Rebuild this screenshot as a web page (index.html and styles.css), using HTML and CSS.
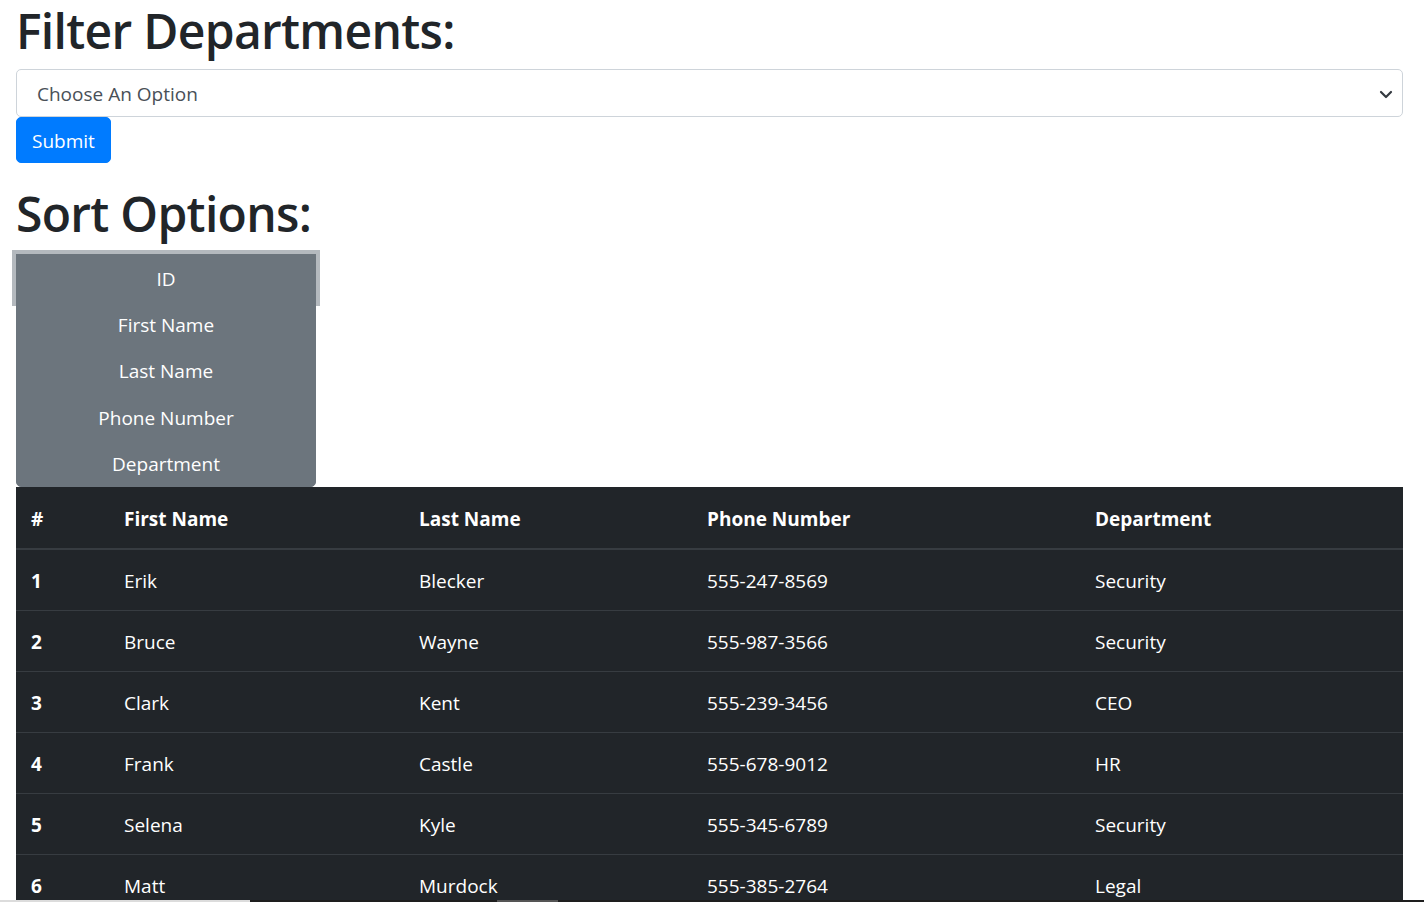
FILE: index.html
```html
<!DOCTYPE html>
<html lang="en">
<head>
<meta charset="utf-8">
<title>Employees</title>
<link rel="stylesheet" href="styles.css">
</head>
<body>
<div class="page">
  <h1 class="title">Filter Departments:</h1>
  <form class="filter">
    <div class="select-wrap">
      <select class="select">
        <option>Choose An Option</option>
      </select>
      <svg class="chevron" width="14" height="10" viewBox="0 0 14 10"><path d="M2 3l5 5 5-5" fill="none" stroke="#343a40" stroke-width="2.2" stroke-linecap="round" stroke-linejoin="round"/></svg>
    </div>
    <button type="button" class="btn-primary">Submit</button>
  </form>

  <h1 class="title title-sort">Sort Options:</h1>
  <div class="sort-group">
    <button type="button" class="sort-btn focused">ID</button>
    <button type="button" class="sort-btn">First Name</button>
    <button type="button" class="sort-btn">Last Name</button>
    <button type="button" class="sort-btn">Phone Number</button>
    <button type="button" class="sort-btn last">Department</button>
  </div>

  <table class="table">
    <colgroup>
      <col class="c1"><col class="c2"><col class="c3"><col class="c4"><col class="c5">
    </colgroup>
    <thead>
      <tr><th>#</th><th>First Name</th><th>Last Name</th><th>Phone Number</th><th>Department</th></tr>
    </thead>
    <tbody>
      <tr><th>1</th><td>Erik</td><td>Blecker</td><td>555-247-8569</td><td>Security</td></tr>
      <tr><th>2</th><td>Bruce</td><td>Wayne</td><td>555-987-3566</td><td>Security</td></tr>
      <tr><th>3</th><td>Clark</td><td>Kent</td><td>555-239-3456</td><td>CEO</td></tr>
      <tr><th>4</th><td>Frank</td><td>Castle</td><td>555-678-9012</td><td>HR</td></tr>
      <tr><th>5</th><td>Selena</td><td>Kyle</td><td>555-345-6789</td><td>Security</td></tr>
      <tr><th>6</th><td>Matt</td><td>Murdock</td><td>555-385-2764</td><td>Legal</td></tr>
    </tbody>
  </table>
</div>
<div class="scrollstrip"></div>
</body>
</html>
```

FILE: styles.css
```css
* { box-sizing: border-box; }
html, body { margin: 0; padding: 0; }
body {
  font-family: "Open Sans", "Noto Sans", "Liberation Sans", sans-serif;
  font-size: 19px;
  line-height: 30px;
  color: #212529;
  background: #fff;
}
.page {
  padding: 1px 21px 0 16px;
}
.title {
  margin: 0 0 9px 0;
  font-size: 48px;
  line-height: 60px;
  font-weight: 600;
  letter-spacing: -0.7px;
  color: #212529;
}
.title-sort {
  margin-top: 21px;
  margin-bottom: 10px;
}
.filter {
  margin: 0;
  display: flex;
  flex-direction: column;
  align-items: flex-start;
}
.select-wrap {
  position: relative;
  width: 100%;
}
.select {
  display: block;
  width: 100%;
  height: 48px;
  margin: -1px 0 0 0;
  padding: 2px 40px 0 20px;
  font: inherit;
  font-size: 19px;
  color: #495057;
  background: #fff;
  border: 1px solid #ced4da;
  border-radius: 5px;
  appearance: none;
  -webkit-appearance: none;
}
.chevron {
  position: absolute;
  right: 10px;
  top: 19px;
}
.btn-primary {
  margin: 0;
  height: 46px;
  padding: 2px 15px 0;
  font: inherit;
  font-size: 19px;
  color: #fff;
  background: #007bff;
  border: 1px solid #007bff;
  border-radius: 5px;
}
.sort-group {
  width: 300px;
  display: flex;
  flex-direction: column;
}
.sort-btn {
  display: block;
  width: 100%;
  height: 47.5px;
  margin: -1.25px 0 0 0;
  padding: 2px 0 0 0;
  font: inherit;
  font-size: 19px;
  color: #fff;
  background: #6c757d;
  border: 1px solid #6c757d;
  border-radius: 0;
  text-align: center;
}
.sort-btn.focused {
  margin-top: 0;
  box-shadow: 0 0 0 4px #b4b9be;
}
.sort-btn.last {
  border-radius: 0 0 5px 5px;
}
.table {
  width: 100%;
  border-collapse: collapse;
  background: #212529;
  color: #fff;
  table-layout: fixed;
}
.c1 { width: 93px; }
.c2 { width: 295px; }
.c3 { width: 288px; }
.c4 { width: 388px; }
.c5 { width: auto; }
.table th, .table td {
  padding: 16px 15px 14px;
  text-align: left;
  vertical-align: top;
  font-size: 19px;
  line-height: 30px;
}
.table thead th {
  padding-top: 17px;
  padding-bottom: 13px;
  font-weight: 700;
  border-bottom: 2px solid #373c41;
  height: 62px;
}
.table tbody th, .table tbody td {
  border-top: 1px solid #373c41;
  font-weight: 400;
}
.table tbody th { font-weight: 700; }
.scrollstrip {
  position: fixed;
  left: 0;
  right: 0;
  bottom: 0;
  height: 2px;
  background: linear-gradient(to right, #dcdcdc 0, #dcdcdc 250px, #1e1e1e 250px, #1e1e1e 497px, #555 497px, #555 558px, #1e1e1e 558px);
}
```
